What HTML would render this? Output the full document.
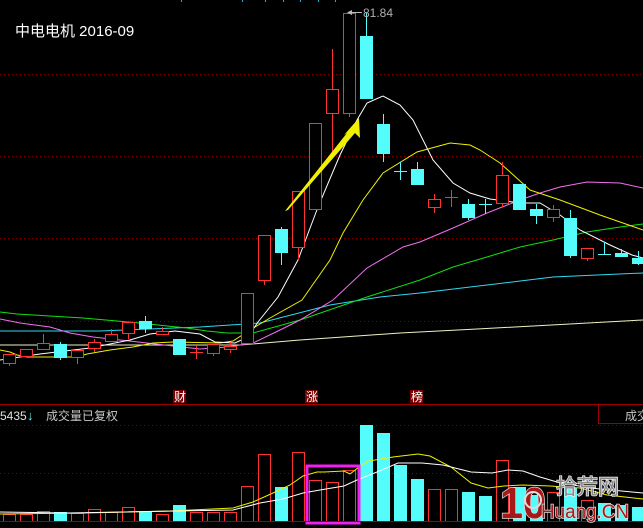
<!DOCTYPE html>
<html><head><meta charset="utf-8"><style>
html,body{margin:0;padding:0;background:#000;width:643px;height:528px;overflow:hidden}
svg{display:block}
text{font-family:"Liberation Sans","Noto Sans CJK SC",sans-serif}
</style></head><body>
<svg width="643" height="528" viewBox="0 0 643 528" xmlns="http://www.w3.org/2000/svg" shape-rendering="crispEdges">
<rect width="643" height="528" fill="#000"/>
<g stroke="#8a0000" stroke-dasharray="1,3" stroke-width="1">
<line x1="0" y1="74.5" x2="643" y2="74.5"/><line x1="0" y1="156.5" x2="643" y2="156.5"/>
<line x1="0" y1="238.5" x2="643" y2="238.5"/><line x1="0" y1="321.5" x2="643" y2="321.5"/>
<line x1="0" y1="425.5" x2="643" y2="425.5"/><line x1="0" y1="473.5" x2="643" y2="473.5"/>
</g>
<g fill="#2aa8c8"><rect x="242" y="0" width="1" height="2"/><rect x="265" y="0" width="1" height="2"/><rect x="283" y="0" width="1" height="2"/><rect x="300" y="0" width="1" height="2"/><rect x="318" y="0" width="1" height="2"/><rect x="335" y="0" width="1" height="2"/><rect x="181" y="0" width="1" height="2"/></g>
<text x="15" y="36" fill="#fff" font-size="15">中电电机 2016-09</text>
<g fill="none" stroke-width="1" shape-rendering="auto">
<polyline stroke="#f0f0c0" points="0,345 240,345 300,340 400,333 477,329 643,320"/>
<polyline stroke="#30d8f0" points="0,331 100,331 200,327 260,323 330,305 380,297 420,293 487,285 553,277 643,273"/>
<polyline stroke="#10e010" points="0,312 17,314 50,316 83,318 117,321 140,323 167,326 187,328 207,331 227,333 253,333 300,320 367,297 420,280 453,267 487,257 520,247 553,240 587,232 620,227 643,224"/>
<polyline stroke="#f070f0" points="0,319 20,323 50,327 70,333 93,337 120,340 147,343 173,346 200,349 227,347 253,343 280,330 300,320 333,300 367,268 403,247 420,242 453,228 487,213 520,200 540,193 560,187 587,182 620,183 643,188"/>
<polyline stroke="#f0f000" points="0,350 10,352 17,355 27,357 77,357 87,354 110,350 133,347 153,343 173,342 220,343 233,341 250,330 270,318 302,300 330,260 343,233 363,200 383,173 417,152 450,143 470,145 480,150 500,163 530,190 560,200 600,215 643,230"/>
<polyline stroke="#fff" points="0,360 40,354 90,348 130,340 150,334 175,331 200,334 215,342 235,343 248,337 258,322 278,297 298,260 318,207 340,155 357,120 367,103 383,96 400,105 413,120 433,160 453,183 470,193 490,199 520,203 540,203 560,215 580,230 610,245 632,255 643,258"/>
</g>
<!-- red candle wicks -->
<g fill="#ff3232">
<rect x="9" y="363" width="1" height="3"/><rect x="43" y="334" width="1" height="9"/><rect x="77" y="357" width="1" height="7"/>
<rect x="94" y="339" width="1" height="13"/><rect x="111" y="329" width="1" height="5"/><rect x="128" y="333" width="1" height="6"/>
<rect x="162" y="327" width="1" height="4"/><rect x="196" y="346" width="1" height="13"/><rect x="190" y="352" width="13" height="1"/>
<rect x="213" y="353" width="1" height="3"/><rect x="230" y="342" width="1" height="11"/><rect x="264" y="280" width="1" height="5"/>
<rect x="298" y="247" width="1" height="13"/><rect x="332" y="49" width="1" height="109"/><rect x="349" y="113" width="1" height="4"/>
<rect x="434" y="194" width="1" height="19"/><rect x="451" y="190" width="1" height="17"/><rect x="445" y="197" width="13" height="1"/>
<rect x="502" y="162" width="1" height="45"/><rect x="553" y="205" width="1" height="17"/><rect x="587" y="258" width="1" height="3"/>
<!-- hollow bodies outer -->
<rect x="3" y="354" width="13" height="10"/><rect x="20" y="349" width="13" height="8"/><rect x="37" y="343" width="13" height="7"/>
<rect x="71" y="350" width="13" height="8"/><rect x="88" y="342" width="13" height="7"/><rect x="105" y="334" width="13" height="8"/>
<rect x="122" y="322" width="13" height="12"/><rect x="156" y="331" width="13" height="4"/><rect x="207" y="344" width="13" height="10"/>
<rect x="224" y="346" width="13" height="4"/><rect x="241" y="293" width="13" height="51"/><rect x="258" y="235" width="13" height="46"/>
<rect x="292" y="191" width="13" height="57"/><rect x="309" y="123" width="13" height="87"/><rect x="326" y="89" width="13" height="25"/>
<rect x="343" y="13" width="13" height="101"/><rect x="428" y="199" width="13" height="9"/><rect x="496" y="175" width="13" height="29"/>
<rect x="547" y="209" width="13" height="9"/><rect x="581" y="248" width="13" height="11"/>
</g>
<g fill="#000">
<rect x="4" y="355" width="11" height="8"/><rect x="21" y="350" width="11" height="6"/><rect x="38" y="344" width="11" height="5"/>
<rect x="72" y="351" width="11" height="6"/><rect x="89" y="343" width="11" height="5"/><rect x="106" y="335" width="11" height="6"/>
<rect x="123" y="323" width="11" height="10"/><rect x="157" y="332" width="11" height="2"/><rect x="208" y="345" width="11" height="8"/>
<rect x="225" y="347" width="11" height="2"/><rect x="242" y="294" width="11" height="49"/><rect x="259" y="236" width="11" height="44"/>
<rect x="293" y="192" width="11" height="55"/><rect x="310" y="124" width="11" height="85"/><rect x="327" y="90" width="11" height="23"/>
<rect x="344" y="14" width="11" height="99"/><rect x="429" y="200" width="11" height="7"/><rect x="497" y="176" width="11" height="27"/>
<rect x="548" y="210" width="11" height="7"/><rect x="582" y="249" width="11" height="9"/>
</g>
<g stroke="#54fcfc" fill="#54fcfc">
<line x1="60.5" y1="342" x2="60.5" y2="360"/><rect x="54.5" y="344.5" width="12" height="13"/>
<line x1="145.5" y1="316" x2="145.5" y2="333"/><rect x="139.5" y="321.5" width="12" height="7"/>
<rect x="173.5" y="339.5" width="12" height="15"/>
<line x1="281.5" y1="227" x2="281.5" y2="265"/><rect x="275.5" y="229.5" width="12" height="23"/>
<line x1="366.5" y1="13" x2="366.5" y2="36"/><rect x="360.5" y="36.5" width="12" height="62"/>
<line x1="383.5" y1="114" x2="383.5" y2="162"/><rect x="377.5" y="124.5" width="12" height="29"/>
<line x1="400.5" y1="162" x2="400.5" y2="180"/><line x1="394" y1="171.5" x2="407" y2="171.5"/>
<line x1="417.5" y1="162" x2="417.5" y2="169"/><rect x="411.5" y="169.5" width="12" height="15"/>
<line x1="468.5" y1="199" x2="468.5" y2="220"/><rect x="462.5" y="204.5" width="12" height="13"/>
<line x1="485.5" y1="199" x2="485.5" y2="214"/><line x1="479" y1="204.5" x2="492" y2="204.5"/>
<rect x="513.5" y="184.5" width="12" height="25"/>
<line x1="536.5" y1="204" x2="536.5" y2="224"/><rect x="530.5" y="209.5" width="12" height="6"/>
<line x1="570.5" y1="210" x2="570.5" y2="258"/><rect x="564.5" y="218.5" width="12" height="37"/>
<line x1="604.5" y1="242" x2="604.5" y2="255"/><line x1="598" y1="254.5" x2="611" y2="254.5"/>
<line x1="621.5" y1="249" x2="621.5" y2="256"/><rect x="615.5" y="253.5" width="12" height="3"/>
<line x1="638.5" y1="251" x2="638.5" y2="265"/><rect x="632.5" y="258.5" width="12" height="5"/>
</g>
<polygon shape-rendering="auto" fill="#f0f000" points="285,211 347,133 344,135 359,118 360,138 355,133 288,210"/>
<line x1="348" y1="12.5" x2="362" y2="12.5" stroke="#bbb"/>
<polygon points="347,12.5 352,10 352,15" fill="#bbb"/>
<text x="363" y="17" fill="#b0b0b0" font-size="12">81.84</text>
<rect x="173" y="390" width="13" height="13" fill="#7a0000"/><text x="174" y="401" fill="#fff" font-size="12">财</text>
<rect x="305" y="390" width="13" height="13" fill="#7a0000"/><text x="306" y="401" fill="#fff" font-size="12">涨</text>
<rect x="410" y="390" width="13" height="13" fill="#7a0000"/><text x="411" y="401" fill="#fff" font-size="12">榜</text>
<line x1="0" y1="404.5" x2="643" y2="404.5" stroke="#a00000"/>
<rect x="598.5" y="404.5" width="50" height="19" fill="none" stroke="#a00000"/>
<text x="0" y="420" fill="#e0e0e0" font-size="12">5435</text>
<text x="27" y="420" fill="#54fcfc" font-size="13" font-weight="bold">↓</text>
<text x="46" y="420" fill="#c8c8c8" font-size="12">成交量已复权</text>
<text x="625" y="420" fill="#c8c8c8" font-size="12">成交</text>
<g fill="#ff3232">
<rect x="3" y="514" width="13" height="8"/><rect x="20" y="514" width="13" height="8"/><rect x="37" y="511" width="13" height="11"/>
<rect x="71" y="513" width="13" height="9"/><rect x="88" y="509" width="13" height="13"/><rect x="105" y="512" width="13" height="10"/>
<rect x="122" y="507" width="13" height="15"/><rect x="156" y="514" width="13" height="8"/><rect x="190" y="512" width="13" height="10"/>
<rect x="207" y="512" width="13" height="10"/><rect x="224" y="512" width="13" height="10"/><rect x="241" y="486" width="13" height="36"/>
<rect x="258" y="454" width="13" height="68"/><rect x="292" y="452" width="13" height="70"/><rect x="309" y="480" width="13" height="42"/>
<rect x="326" y="482" width="13" height="40"/><rect x="343" y="470" width="13" height="52"/><rect x="428" y="489" width="13" height="33"/>
<rect x="445" y="489" width="13" height="33"/><rect x="496" y="460" width="13" height="62"/><rect x="547" y="492" width="13" height="30"/>
<rect x="581" y="500" width="13" height="22"/>
</g>
<g fill="#000">
<rect x="4" y="515" width="11" height="6"/><rect x="21" y="515" width="11" height="6"/><rect x="38" y="512" width="11" height="9"/>
<rect x="72" y="514" width="11" height="7"/><rect x="89" y="510" width="11" height="11"/><rect x="106" y="513" width="11" height="8"/>
<rect x="123" y="508" width="11" height="13"/><rect x="157" y="515" width="11" height="6"/><rect x="191" y="513" width="11" height="8"/>
<rect x="208" y="513" width="11" height="8"/><rect x="225" y="513" width="11" height="8"/><rect x="242" y="487" width="11" height="34"/>
<rect x="259" y="455" width="11" height="66"/><rect x="293" y="453" width="11" height="68"/><rect x="310" y="481" width="11" height="40"/>
<rect x="327" y="483" width="11" height="38"/><rect x="344" y="471" width="11" height="50"/><rect x="429" y="490" width="11" height="31"/>
<rect x="446" y="490" width="11" height="31"/><rect x="497" y="461" width="11" height="60"/><rect x="548" y="493" width="11" height="28"/>
<rect x="582" y="501" width="11" height="20"/>
</g>
<g fill="#54fcfc">
<rect x="54" y="512" width="13" height="9"/><rect x="139" y="512" width="13" height="9"/><rect x="173" y="505" width="13" height="16"/>
<rect x="275" y="487" width="13" height="34"/><rect x="360" y="425" width="13" height="96"/><rect x="377" y="433" width="13" height="88"/>
<rect x="394" y="465" width="13" height="56"/><rect x="411" y="479" width="13" height="42"/><rect x="462" y="492" width="13" height="29"/>
<rect x="479" y="496" width="13" height="25"/><rect x="513" y="487" width="13" height="34"/><rect x="530" y="495" width="13" height="26"/>
<rect x="564" y="488" width="13" height="33"/><rect x="598" y="503" width="13" height="18"/><rect x="615" y="505" width="13" height="16"/><rect x="632" y="507" width="13" height="14"/>
</g>
<g fill="none" shape-rendering="auto">
<polyline stroke="#f0f000" points="0,514 85,513 170,511 233,508 253,502 273,493 290,485 303,476 317,472 324,472 344,471 350,474 359,467 369,461 393,457 418,454 430,456 451,467 471,483 488,488 504,486 523,485 550,486 580,488 607,495 643,499"/>
<polyline stroke="#fff" points="0,512 67,513 233,510 260,503 283,499 303,493 320,490 344,486 357,480 377,472 398,463 422,463 443,465 471,472 492,473 508,470 523,471 540,477 557,482 590,488 643,493"/>
</g>
<rect x="307" y="466" width="52" height="57" fill="none" stroke="#f020f0" stroke-width="3"/>
<line x1="0" y1="521.5" x2="643" y2="521.5" stroke="#a00000"/>
<g shape-rendering="auto">
<text x="500" y="518" fill="#a81818" stroke="#ddd" stroke-width="1.5" paint-order="stroke" font-size="44" font-weight="bold" textLength="46" lengthAdjust="spacingAndGlyphs">10</text>
<circle cx="533" cy="500" r="8" fill="none" stroke="#ddd" stroke-width="2"/>
<text x="556" y="494" fill="#888" stroke="#eee" stroke-width="1.5" paint-order="stroke" font-size="21" font-family="Noto Sans CJK SC,sans-serif">拾荒网</text>
<text x="541" y="518" fill="#a81818" stroke="#ddd" stroke-width="1.5" paint-order="stroke" font-size="19" textLength="88" lengthAdjust="spacingAndGlyphs">Huang.CN</text>
</g>
</svg>
</body></html>
